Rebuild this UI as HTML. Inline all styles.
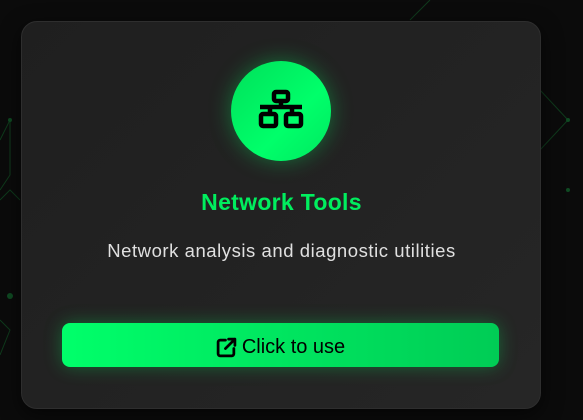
<!DOCTYPE html>
<html><head><style>
html,body{margin:0;padding:0;width:583px;height:420px;overflow:hidden;background:#0b0b0b;font-family:"Liberation Sans",sans-serif}
.bg{position:absolute;inset:0}
.card{position:absolute;left:21px;top:21px;width:518px;height:386px;border-radius:16px;background:linear-gradient(135deg,#1f1f1f,#262626);border:1px solid #2e2e2e;box-shadow:0 6px 20px rgba(0,0,0,.6)}
.circle{position:absolute;left:231px;top:61px;width:100px;height:100px;border-radius:50%;background:linear-gradient(135deg,#00e05a,#00ff6a 60%,#00e860);box-shadow:0 0 22px rgba(0,255,100,.35)}
.title{position:absolute;left:0;width:563px;top:189px;text-align:center;color:#00ee5e;font-size:23px;font-weight:bold;letter-spacing:0.3px}
.desc{position:absolute;left:0;width:563px;top:240px;text-align:center;color:#e0e0e0;font-size:18.5px;letter-spacing:0.55px}
.btn{position:absolute;left:62px;top:323px;width:437px;height:44px;border-radius:8px;background:linear-gradient(90deg,#00ff6a,#00cc55);box-shadow:0 0 18px rgba(0,255,100,.3);color:#000;font-size:20px;display:flex;align-items:center;justify-content:center;gap:5px;padding-top:4px;box-sizing:border-box}
</style></head><body>
<svg class="bg" width="583" height="420"><g stroke="#0f3a1c" stroke-width="1" fill="none">
<path d="M0 140 L10 120 L10 175 L0 190"/><path d="M0 355 L10 330 L0 320"/><path d="M540 90 L568 120 L540 150"/><path d="M430 0 L410 20"/><path d="M0 200 L10 190 L20 200"/>
</g><g fill="#0f4a22"><circle cx="10" cy="296" r="3"/><circle cx="568" cy="120" r="2"/><circle cx="568" cy="190" r="2"/><circle cx="10" cy="120" r="2"/></g></svg>
<div class="card"></div>
<div class="circle"></div>
<svg style="position:absolute;left:258px;top:89px" width="46" height="42" viewBox="0 0 46 42"><g fill="none" stroke="#000" stroke-width="4.5" stroke-linejoin="round"><rect x="16" y="3" width="14" height="9" rx="2"/><path d="M23 12V18M2 18H44M12 18V25M34 18V25"/><rect x="3" y="25" width="15" height="12" rx="2"/><rect x="28" y="25" width="15" height="12" rx="2"/></g></svg>
<div class="title">Network Tools</div>
<div class="desc">Network analysis and diagnostic utilities</div>
<div class="btn"><svg width="21" height="21" viewBox="0 0 20 20"><g fill="none" stroke="#000" stroke-width="2.6" stroke-linecap="round" stroke-linejoin="round"><path d="M9 3H4a2 2 0 0 0-2 2v11a2 2 0 0 0 2 2h11a2 2 0 0 0 2-2v-5"/><path d="M12 2H18V8M18 2L9 11"/></g></svg>Click to use</div>
</body></html>
